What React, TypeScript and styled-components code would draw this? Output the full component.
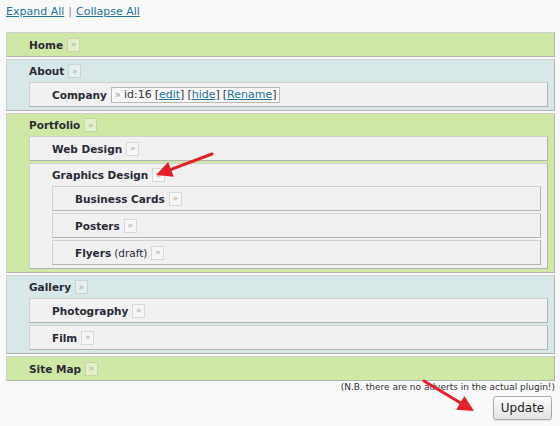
import React from 'react';
import styled, { createGlobalStyle } from 'styled-components';

const GlobalStyle = createGlobalStyle`
  html, body { margin: 0; padding: 0; background: #f9f9f9; }
  body { font-family: "DejaVu Sans", Verdana, sans-serif; color: #333; }
  * { box-sizing: border-box; }
`;

type Tone = 'green' | 'blue' | 'plain';

type TreeNode = {
  label: string;
  suffix?: string;
  details?: boolean;
  children?: TreeNode[];
};

const data: TreeNode[] = [
  { label: 'Home' },
  { label: 'About', children: [{ label: 'Company', details: true }] },
  {
    label: 'Portfolio',
    children: [
      { label: 'Web Design' },
      {
        label: 'Graphics Design',
        children: [
          { label: 'Business Cards' },
          { label: 'Posters' },
          { label: 'Flyers', suffix: '(draft)' },
        ],
      },
    ],
  },
  { label: 'Gallery', children: [{ label: 'Photography' }, { label: 'Film' }] },
  { label: 'Site Map' },
];

const toneBg: Record<Tone, string> = {
  green: '#d0e8a5',
  blue: '#d8e7e7',
  plain: '#f1f1f1',
};

const Page = styled.div`
  position: relative;
  width: 560px;
  height: 426px;
  padding: 0 5px 0 6px;
`;

const Toolbar = styled.div`
  height: 32px;
  padding-top: 5px;
  font-size: 11px;
  line-height: 14px;
  color: #999;
`;

const ToolLink = styled.a`
  color: #21759b;
  text-decoration: underline;
  cursor: pointer;
`;

const Separator = styled.span`
  margin: 0 4px;
  color: #888;
`;

const TreeList = styled.ul`
  margin: 0;
  padding: 0;
  list-style: none;
  display: flex;
  flex-direction: column;
  gap: 2px;
`;

const Item = styled.li<{ $tone: Tone }>`
  list-style: none;
  background: ${(p) => toneBg[p.$tone]};
  border: 1px solid;
  border-color: #d0d0d0 #b2b2b2 #b2b2b2 #d0d0d0;
`;

const Header = styled.div<{ $leaf: boolean }>`
  display: flex;
  align-items: center;
  height: ${(p) => (p.$leaf ? 23 : 22)}px;
  padding-left: 22px;
  white-space: nowrap;
`;

const Label = styled.span`
  font-weight: bold;
  font-size: 10.5px;
  color: #2a2a36;
`;

const Suffix = styled.span`
  font-weight: normal;
  margin-left: 3px;
`;

const Toggle = styled.span`
  display: inline-flex;
  align-items: center;
  justify-content: center;
  width: 13px;
  height: 14px;
  margin-left: 4px;
  border: 1px solid rgba(0, 0, 0, 0.12);
  background: rgba(255, 255, 255, 0.4);
  color: #aaa;
  font-size: 9px;
  line-height: 1;
`;

const Details = styled.span`
  display: inline-flex;
  align-items: center;
  gap: 3px;
  height: 16px;
  margin-left: 4px;
  padding: 0 3px;
  border: 1px solid #b8b8b8;
  background: #f7f7f7;
  font-size: 11px;
  color: #333;
`;

const Chevron = styled.span`
  color: #999;
  font-size: 10px;
`;

const DetailLink = styled.a`
  color: #21759b;
  text-decoration: underline;
  cursor: pointer;
`;

const Children = styled.ul`
  margin: 0;
  padding: 0 6px 3px 22px;
  list-style: none;
  display: flex;
  flex-direction: column;
  gap: 2px;
`;

const Footer = styled.div`
  display: flex;
  flex-direction: column;
  align-items: flex-end;
`;

const Note = styled.div`
  font-size: 9px;
  line-height: 13px;
  color: #333;
`;

const UpdateButton = styled.button`
  margin-top: 2px;
  margin-right: 3px;
  width: 59px;
  height: 24px;
  padding: 0;
  font-family: "DejaVu Sans", Verdana, sans-serif;
  font-size: 12px;
  color: #222;
  border: 1px solid #a9a9a9;
  border-radius: 3px;
  background: linear-gradient(#fdfdfd, #e2e2e2);
  box-shadow: 0 1px 1px rgba(0, 0, 0, 0.1);
`;

const Overlay = styled.svg`
  position: absolute;
  left: 0;
  top: 0;
  pointer-events: none;
`;

const Bracketed: React.FC<{ text: string }> = ({ text }) => (
  <span>
    [<DetailLink>{text}</DetailLink>]
  </span>
);

const TreeItem: React.FC<{ node: TreeNode; tone: Tone }> = ({ node, tone }) => {
  const leaf = !node.children;
  return (
    <Item $tone={tone}>
      <Header $leaf={leaf}>
        <Label>
          {node.label}
          {node.suffix && <Suffix>{node.suffix}</Suffix>}
        </Label>
        {node.details ? (
          <Details>
            <Chevron>»</Chevron>
            <span>id:16</span>
            <Bracketed text="edit" />
            <Bracketed text="hide" />
            <Bracketed text="Rename" />
          </Details>
        ) : (
          <Toggle>»</Toggle>
        )}
      </Header>
      {node.children && (
        <Children>
          {node.children.map((c) => (
            <TreeItem key={c.label} node={c} tone="plain" />
          ))}
        </Children>
      )}
    </Item>
  );
};

const Arrow: React.FC<{ x1: number; y1: number; x2: number; y2: number }> = ({ x1, y1, x2, y2 }) => {
  const dx = x2 - x1;
  const dy = y2 - y1;
  const len = Math.hypot(dx, dy);
  const ux = dx / len;
  const uy = dy / len;
  const headLen = 16;
  const half = 8;
  const bx = x2 - ux * headLen;
  const by = y2 - uy * headLen;
  const nx = -uy;
  const ny = ux;
  const pts = `${x2},${y2} ${bx + nx * half},${by + ny * half} ${bx - nx * half},${by - ny * half}`;
  return (
    <g>
      <line x1={x1} y1={y1} x2={bx + ux * 2} y2={by + uy * 2} stroke="#e3202a" strokeWidth={3} strokeLinecap="round" />
      <polygon points={pts} fill="#e3202a" />
    </g>
  );
};

export default function App() {
  return (
    <>
      <GlobalStyle />
      <Page>
        <Toolbar>
          <ToolLink>Expand All</ToolLink>
          <Separator>|</Separator>
          <ToolLink>Collapse All</ToolLink>
        </Toolbar>
        <TreeList>
          {data.map((n, i) => (
            <TreeItem key={n.label} node={n} tone={i % 2 === 0 ? 'green' : 'blue'} />
          ))}
        </TreeList>
        <Footer>
          <Note>(N.B. there are no adverts in the actual plugin!)</Note>
          <UpdateButton>Update</UpdateButton>
        </Footer>
        <Overlay width={560} height={426} viewBox="0 0 560 426">
          <Arrow x1={212} y1={154} x2={156} y2={175} />
          <Arrow x1={424} y1={381} x2={474} y2={411} />
        </Overlay>
      </Page>
    </>
  );
}
